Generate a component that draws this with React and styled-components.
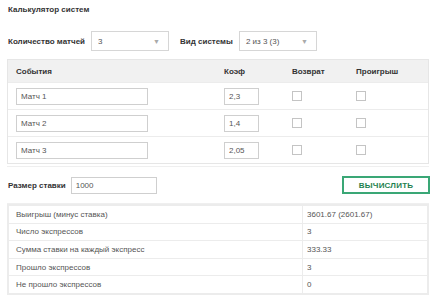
import React from "react";
import styled, { createGlobalStyle } from "styled-components";

const GlobalStyle = createGlobalStyle`
  body {
    margin: 0;
    background: #fff;
    font-family: "Liberation Sans", Arial, sans-serif;
    font-size: 8px;
    color: #333;
  }
`;

const matches = [
  { name: "Матч 1", coef: "2,3" },
  { name: "Матч 2", coef: "1,4" },
  { name: "Матч 3", coef: "2,05" },
];

const results = [
  ["Выигрыш (минус ставка)", "3601.67 (2601.67)"],
  ["Число экспрессов", "3"],
  ["Сумма ставки на каждый экспресс", "333.33"],
  ["Прошло экспрессов", "3"],
  ["Не прошло экспрессов", "0"],
];

const App = () => {
  return (
    <Page>
      <GlobalStyle />
      <Title>Калькулятор систем</Title>

      <Controls>
        <Label>Количество матчей</Label>
        <Select width="78px">
          <span>3</span>
          <Arrow>▼</Arrow>
        </Select>
        <Label>Вид системы</Label>
        <Select width="78px">
          <span>2 из 3 (3)</span>
          <Arrow>▼</Arrow>
        </Select>
      </Controls>

      <Events>
        <HeadRow>
          <Cell>События</Cell>
          <Cell>Коэф</Cell>
          <Cell>Возврат</Cell>
          <Cell>Проигрыш</Cell>
        </HeadRow>
        {matches.map((m) => (
          <Row key={m.name}>
            <Cell>
              <TextInput width="132px">{m.name}</TextInput>
            </Cell>
            <Cell>
              <TextInput width="35px">{m.coef}</TextInput>
            </Cell>
            <Cell>
              <Check />
            </Cell>
            <Cell>
              <Check />
            </Cell>
          </Row>
        ))}
      </Events>

      <StakeBar>
        <Label>Размер ставки</Label>
        <TextInput width="86px">1000</TextInput>
        <Calc>ВЫЧИСЛИТЬ</Calc>
      </StakeBar>

      <Results>
        {results.map(([k, v]) => (
          <ResultRow key={k}>
            <ResultKey>{k}</ResultKey>
            <ResultValue>{v}</ResultValue>
          </ResultRow>
        ))}
      </Results>
    </Page>
  );
};

export default App;

const Page = styled.div`
  width: 422px;
  margin-left: 7px;
  display: flex;
  flex-direction: column;
`;

const Title = styled.div`
  font-weight: bold;
  padding: 5px 1px 0;
  height: 13px;
  line-height: 10px;
`;

const Controls = styled.div`
  display: flex;
  align-items: center;
  margin-top: 13px;
  padding-left: 1px;
  height: 20px;
  gap: 6px;

  & > *:nth-child(3) {
    margin-left: 5px;
  }
`;

const Label = styled.span`
  font-weight: bold;
  color: #333;
`;

const Select = styled.div`
  box-sizing: border-box;
  width: ${({ width }) => width};
  height: 20px;
  border: 1px solid #d6d6d6;
  display: flex;
  align-items: center;
  justify-content: space-between;
  padding: 0 8px 0 6px;
  color: #555;
`;

const Arrow = styled.span`
  font-size: 7px;
  color: #aaa;
`;

const Events = styled.div`
  margin-top: 8px;
  border: 1px solid #e6e6e6;
  display: flex;
  flex-direction: column;
`;

const HeadRow = styled.div`
  display: grid;
  grid-template-columns: 208px 68px 64px 1fr;
  height: 22px;
  align-items: center;
  background: #f1f1f1;
  font-weight: bold;
`;

const Row = styled.div`
  display: grid;
  grid-template-columns: 208px 68px 64px 1fr;
  height: 27px;
  align-items: center;
  border-top: 1px solid #ececec;
  box-sizing: border-box;
`;

const Cell = styled.div`
  padding-left: 8px;
  display: flex;
  align-items: center;
`;

const TextInput = styled.div`
  box-sizing: border-box;
  width: ${({ width }) => width};
  height: 17px;
  border: 1px solid #cfcfcf;
  padding-left: 4px;
  display: flex;
  align-items: center;
  color: #555;
`;

const Check = styled.span`
  box-sizing: border-box;
  width: 10px;
  height: 10px;
  border: 1px solid #c4c4c4;
  background: #fff;
`;

const StakeBar = styled.div`
  margin-top: 2px;
  border-top: 1px solid #efefef;
  border-bottom: 1px solid #efefef;
  height: 38px;
  box-sizing: border-box;
  display: flex;
  align-items: center;
  padding-left: 1px;
  gap: 5px;
`;

const Calc = styled.div`
  margin-left: auto;
  margin-right: -1px;
  box-sizing: border-box;
  width: 88px;
  height: 18px;
  border: 2px solid #3aa776;
  color: #1e7f4f;
  font-weight: bold;
  display: flex;
  align-items: center;
  justify-content: center;
  letter-spacing: 0.2px;
`;

const Results = styled.div`
  margin-top: 0;
  border: 2px solid #ececec;
  display: flex;
  flex-direction: column;
`;

const ResultRow = styled.div`
  display: grid;
  grid-template-columns: 294px 1fr;
  height: 16.6px;
  align-items: center;
  color: #555;

  & + & {
    border-top: 1px solid #ececec;
  }
`;

const ResultKey = styled.div`
  padding-left: 7px;
  height: 100%;
  display: flex;
  align-items: center;
  border-right: 1px solid #ececec;
`;

const ResultValue = styled.div`
  padding-left: 4px;
`;
